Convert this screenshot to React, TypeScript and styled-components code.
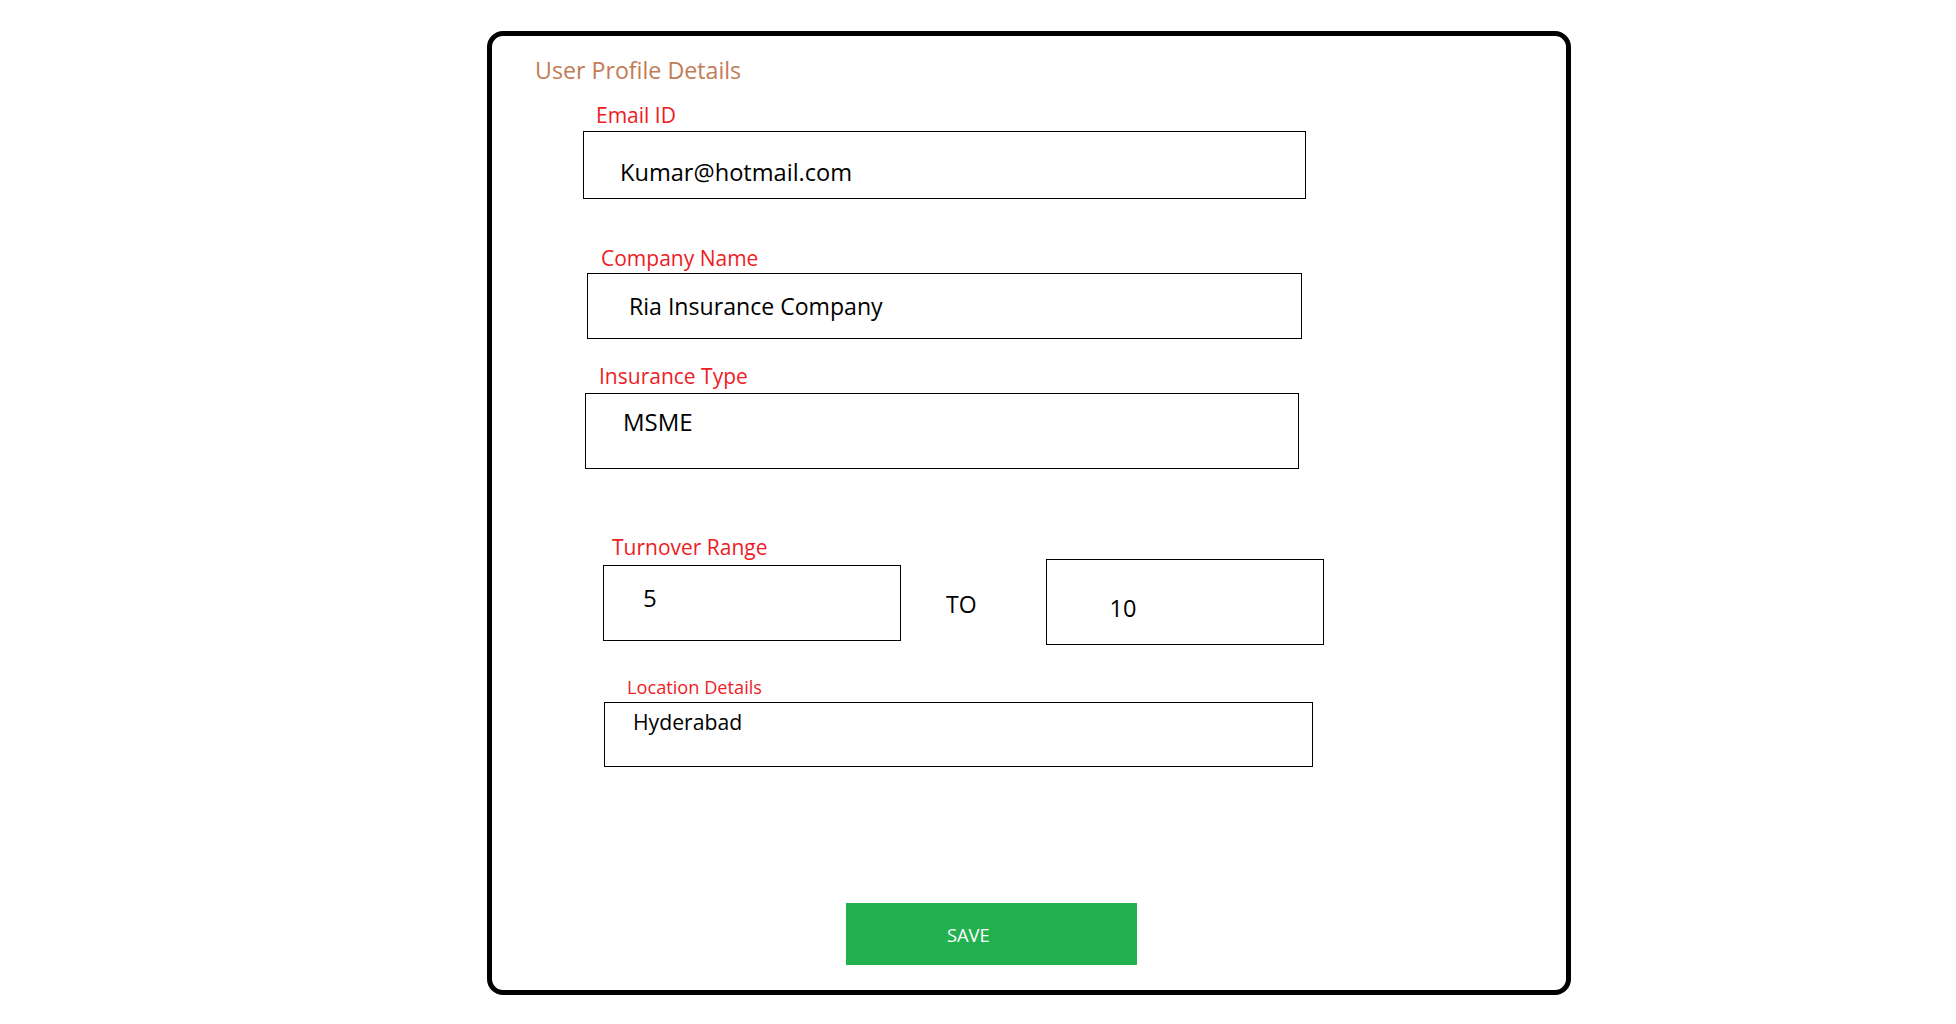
import React from "react";
import styled, { createGlobalStyle } from "styled-components";

const GlobalStyle = createGlobalStyle`
  html, body {
    margin: 0;
    padding: 0;
    background: #ffffff;
  }
  body {
    font-family: "Open Sans", "Noto Sans", sans-serif;
    color: #000;
  }
  * { box-sizing: border-box; }
`;

const Card = styled.div`
  margin: 31px 0 0 487px;
  width: 1084px;
  height: 964px;
  border: 5px solid #000;
  border-radius: 16px;
  display: flex;
  flex-direction: column;
  align-items: flex-start;
`;

const Title = styled.h1`
  margin: 23px 0 0 43px;
  font-size: 23.2px;
  line-height: 23px;
  font-weight: 400;
  color: #c17c56;
`;

const Group = styled.div<{ $top: number; $left: number }>`
  margin: ${(p) => p.$top}px 0 0 ${(p) => p.$left}px;
  display: flex;
  flex-direction: column;
  align-items: flex-start;
`;

const Label = styled.label<{ $left: number; $size: number; $lh: number; $gap: number }>`
  display: block;
  margin: 0 0 ${(p) => p.$gap}px ${(p) => p.$left}px;
  font-size: ${(p) => p.$size}px;
  line-height: ${(p) => p.$lh}px;
  color: #ee1c25;
`;

const Field = styled.div<{
  $w: number;
  $h: number;
  $pt: number;
  $pl: number;
  $size: number;
  $top?: number;
}>`
  width: ${(p) => p.$w}px;
  height: ${(p) => p.$h}px;
  margin-top: ${(p) => p.$top ?? 0}px;
  border: 1px solid #000;
  background: #fff;
  padding: ${(p) => p.$pt}px 0 0 ${(p) => p.$pl}px;
  font-size: ${(p) => p.$size}px;
  line-height: 24px;
  color: #000;
  white-space: nowrap;
`;

const RangeRow = styled.div`
  display: flex;
  align-items: flex-start;
  margin-top: 1px;
`;

const RangeSep = styled.span`
  margin: 34px 69px 0 45px;
  font-size: 23px;
  line-height: 23px;
  color: #000;
`;

const SaveButton = styled.button`
  margin: 136px 0 0 354px;
  width: 291px;
  height: 62px;
  border: none;
  background: #23b04e;
  color: #ffffff;
  font-family: "Open Sans", "Noto Sans", sans-serif;
  font-size: 18.3px;
  line-height: 18px;
  text-align: left;
  padding: 1px 0 0 101px;
  cursor: pointer;
`;

const HydLine = styled.div`
  line-height: 22px;
`;

export default function App() {
  return (
    <>
      <GlobalStyle />
      <Card>
        <Title>User Profile Details</Title>

        <Group $top={23} $left={91}>
          <Label $left={13} $size={21} $lh={21} $gap={5}>
            Email ID
          </Label>
          <Field $w={723} $h={68} $pt={28} $pl={36} $size={23.6}>
            Kumar@hotmail.com
          </Field>
        </Group>

        <Group $top={49} $left={95}>
          <Label $left={14} $size={21} $lh={21} $gap={4}>
            Company Name
          </Label>
          <Field $w={715} $h={66} $pt={20} $pl={41} $size={23.1}>
            Ria Insurance Company
          </Field>
        </Group>

        <Group $top={27} $left={93}>
          <Label $left={14} $size={21} $lh={21} $gap={6}>
            Insurance Type
          </Label>
          <Field $w={714} $h={76} $pt={16} $pl={37} $size={24}>
            MSME
          </Field>
        </Group>

        <Group $top={68} $left={111}>
          <Label $left={9} $size={21} $lh={21} $gap={0}>
            Turnover Range
          </Label>
          <RangeRow>
            <Field $w={298} $h={76} $pt={20} $pl={39} $size={24} $top={6}>
              5
            </Field>
            <RangeSep>TO</RangeSep>
            <Field $w={278} $h={86} $pt={36} $pl={63} $size={23.5}>
              10
            </Field>
          </RangeRow>
        </Group>

        <Group $top={33} $left={112}>
          <Label $left={23} $size={18.2} $lh={18} $gap={6}>
            Location Details
          </Label>
          <Field $w={709} $h={65} $pt={8} $pl={28} $size={21.2}>
            <HydLine>Hyderabad</HydLine>
          </Field>
        </Group>

        <SaveButton type="button">SAVE</SaveButton>
      </Card>
    </>
  );
}
